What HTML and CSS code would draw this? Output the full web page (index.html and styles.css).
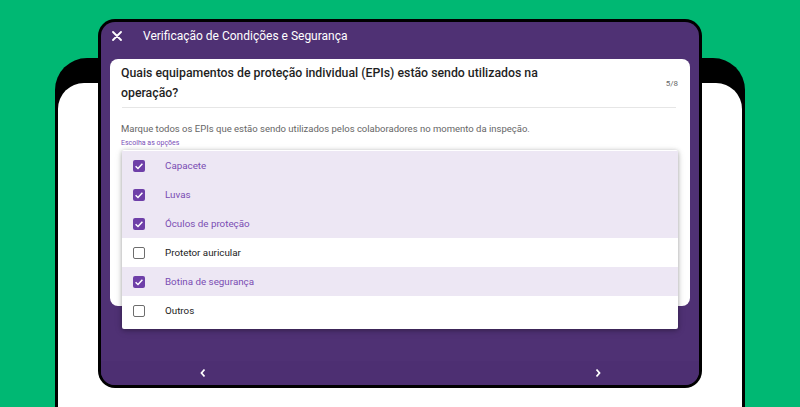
FILE: index.html
```html
<!DOCTYPE html>
<html lang="pt">
<head>
<meta charset="utf-8">
<link rel="stylesheet" href="styles.css">
</head>
<body>
<div class="stage">
  <div class="back-device">
    <div class="back-screen"></div>
  </div>
  <div class="device">
    <div class="screen">
      <header class="topbar">
        <svg class="close" width="10" height="10" viewBox="0 0 10 10"><path d="M1 1L9 9M9 1L1 9" stroke="#fff" stroke-width="1.8" stroke-linecap="round"/></svg>
        <span class="title">Verificação de Condições e Segurança</span>
      </header>
      <div class="content">
        <div class="card">
          <div class="qhead">
            <h1 class="question">Quais equipamentos de proteção individual (EPIs) estão sendo utilizados na operação?</h1>
            <span class="step">5/8</span>
          </div>
          <div class="divider"></div>
          <p class="desc">Marque todos os EPIs que estão sendo utilizados pelos colaboradores no momento da inspeção.</p>
          <div class="field-label">Escolha as opções</div>
        </div>
        <ul class="menu">
          <li class="opt on"><span class="cb"><svg viewBox="0 0 12 12" width="12" height="12"><path d="M2.6 6.2L5 8.5L9.4 3.8" fill="none" stroke="#fff" stroke-width="1.5"/></svg></span>Capacete</li>
          <li class="opt on"><span class="cb"><svg viewBox="0 0 12 12" width="12" height="12"><path d="M2.6 6.2L5 8.5L9.4 3.8" fill="none" stroke="#fff" stroke-width="1.5"/></svg></span>Luvas</li>
          <li class="opt on"><span class="cb"><svg viewBox="0 0 12 12" width="12" height="12"><path d="M2.6 6.2L5 8.5L9.4 3.8" fill="none" stroke="#fff" stroke-width="1.5"/></svg></span>Óculos de proteção</li>
          <li class="opt"><span class="cb"></span>Protetor auricular</li>
          <li class="opt on"><span class="cb"><svg viewBox="0 0 12 12" width="12" height="12"><path d="M2.6 6.2L5 8.5L9.4 3.8" fill="none" stroke="#fff" stroke-width="1.5"/></svg></span>Botina de segurança</li>
          <li class="opt"><span class="cb"></span>Outros</li>
        </ul>
      </div>
      <footer class="nav">
        <svg class="chev" width="8" height="10" viewBox="0 0 8 10"><path d="M5.5 1.5L2.5 5L5.5 8.5" fill="none" stroke="#fff" stroke-width="1.8"/></svg>
        <svg class="chev" width="8" height="10" viewBox="0 0 8 10"><path d="M2.5 1.5L5.5 5L2.5 8.5" fill="none" stroke="#fff" stroke-width="1.8"/></svg>
      </footer>
    </div>
  </div>
</div>
</body>
</html>
```
FILE: styles.css
```css
* { box-sizing: border-box; margin: 0; padding: 0; }
html, body { width: 800px; height: 407px; overflow: hidden; }
body { background: #00b873; font-family: Roboto, "Noto Sans", sans-serif; }

.stage { position: relative; width: 800px; height: 407px; padding-top: 58px; padding-left: 55px; }

.back-device {
  width: 690px;
  height: 349px;
  background: #000;
  border-radius: 32px 32px 0 0;
  padding: 25px 3px 0 3px;
}
.back-screen {
  width: 100%;
  height: 100%;
  background: #fff;
  border-radius: 26px 26px 0 0;
}

.device {
  position: absolute;
  left: 98px;
  top: 19px;
  width: 604px;
  height: 369px;
  background: #000;
  border-radius: 17px;
  padding: 3px;
}
.screen {
  height: 100%;
  background: #4f3174;
  border-radius: 14px;
  display: flex;
  flex-direction: column;
  overflow: hidden;
}

.topbar {
  height: 37px;
  display: flex;
  align-items: center;
  padding: 0 0 10px 11px;
  color: #fff;
  flex-shrink: 0;
}
.close { margin-right: 21px; }
.title { font-size: 12px; font-weight: 400; }

.content {
  position: relative;
  flex: 1;
  padding: 0 9px;
}
.card {
  background: #fff;
  border-radius: 8px;
  height: 247px;
  padding: 4px 12px 0 11px;
}
.qhead { display: flex; justify-content: space-between; align-items: flex-start; }
.question {
  width: 460px;
  font-size: 12.3px;
  font-weight: 500;
  line-height: 20px;
  color: #1f1f1f;
}
.step { font-size: 8px; color: #666; margin-top: 16px; }
.divider { height: 1px; background: #e6e6e6; margin: 4px 2px 0 1px; }
.desc { font-size: 9.5px; color: #666; margin-top: 14px; line-height: 13px; }
.field-label { font-size: 7px; color: #7b4fb8; margin-top: 4px; line-height: 9px; }

.menu {
  position: absolute;
  left: 21px;
  top: 91px;
  width: 556px;
  list-style: none;
  background: #fff;
  border-radius: 2px;
  padding: 1px 0 4px;
  box-shadow: 0 1px 4px rgba(0,0,0,0.3), 0 2px 8px rgba(0,0,0,0.12);
}
.opt {
  height: 29px;
  display: flex;
  align-items: center;
  padding-left: 11px;
  font-size: 9.8px;
  color: #222;
}
.opt.on { background: #ede7f4; color: #7a4db3; }
.cb {
  width: 12px;
  height: 12px;
  border: 1.6px solid #6d6d6d;
  border-radius: 2px;
  margin-right: 20px;
  display: flex;
  align-items: center;
  justify-content: center;
}
.opt.on .cb { background: #6e3fa8; border: none; }

.nav {
  height: 24px;
  flex-shrink: 0;
  display: flex;
  align-items: center;
  justify-content: space-between;
  padding: 0 97px 0 98px;
  background: #4d2f72;
}
```
